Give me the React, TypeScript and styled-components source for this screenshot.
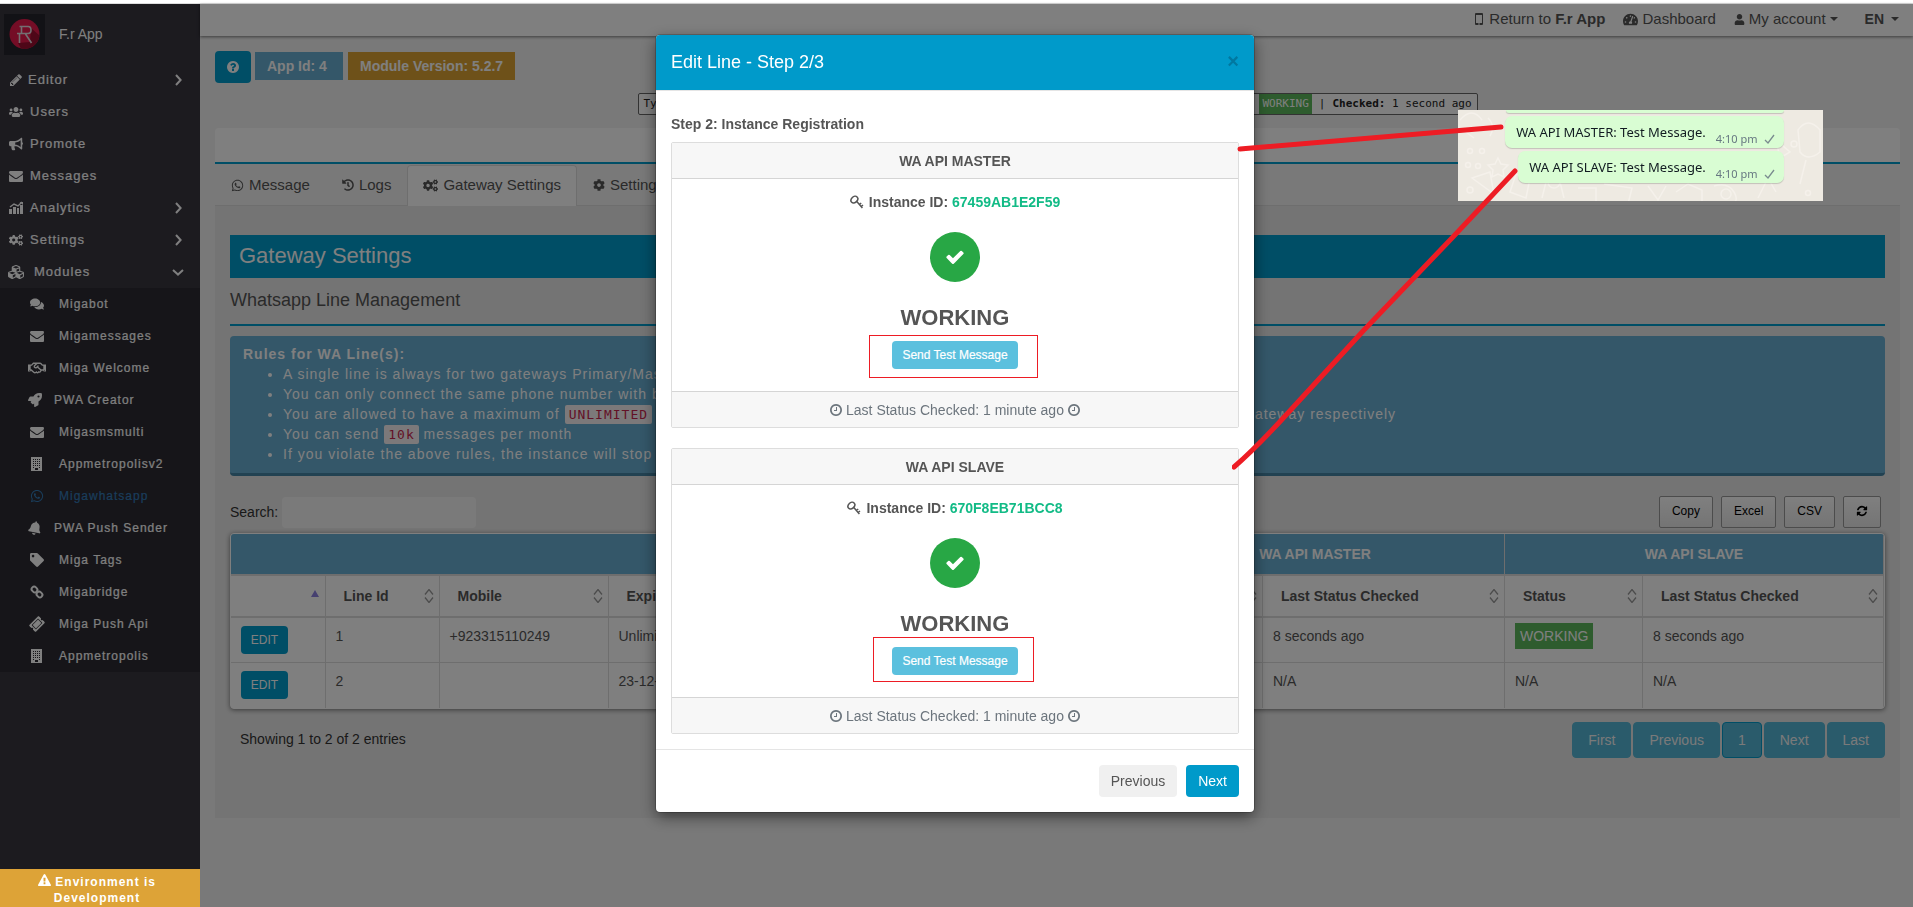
import React from "react";
import styled, { createGlobalStyle } from "styled-components";
import {
  FaUsers, FaBullhorn, FaCogs, FaCubes, FaComments, FaRegHandshake, FaRocket, FaWhatsapp,
  FaBell, FaTag, FaTicketAlt, FaHistory, FaTachometerAlt, FaUser, FaCog,
} from "react-icons/fa";

const blue = "#009ccc";
const steel = "#68aed2";
const sans = `"Liberation Sans", Arial, sans-serif`;
const mono = `"DejaVu Sans Mono", "Courier New", monospace`;

const GlobalStyle = createGlobalStyle`
  * { box-sizing: border-box; }
  body { margin: 0; font: 14px/20px ${sans}; color: #555; background: #f3f3f3; }
  button, input { font-family: inherit; margin: 0; }
  button { cursor: pointer; }
  a { color: inherit; text-decoration: none; }
  ul { margin: 0; padding: 0; list-style: none; }
  h1, h2, h3, h4, p { margin: 0; font-size: inherit; font-weight: normal; }
`;

/* ---------- icons ---------- */

const Svg = styled.svg<{ $size?: number }>`
  width: ${(p) => p.$size ?? 14}px;
  height: ${(p) => p.$size ?? 14}px;
  fill: currentColor;
  flex: none;
`;

const DISC = "M1664 896q0 209-103 385.5t-279.5 279.5-385.5 103-385.5-103-279.5-279.5-103-385.5 103-385.5 279.5-279.5 385.5-103 385.5 103 279.5 279.5 103 385.5z";

const glyphs = {
  check: "M1671 566q0 40-28 68l-724 724-136 136q-28 28-68 28t-68-28l-136-136-362-362q-28-28-28-68t28-68l136-136q28-28 68-28t68 28l294 295 656-657q28-28 68-28t68 28l136 136q28 28 28 68z",
  pencil: "M491 1536l91-91-235-235-91 91v107h128v128h107zm523-928q0-22-22-22-10 0-17 7l-542 542q-7 7-7 17 0 22 22 22 10 0 17-7l542-542q7-7 7-17zm-54-192l416 416-832 832h-416v-416zm683 96q0 53-37 90l-166 166-416-416 166-165q36-38 90-38 53 0 91 38l235 234q37 39 37 91z",
  envelope: "M1792 710v794q0 66-47 113t-113 47h-1472q-66 0-113-47t-47-113v-794q44 49 101 87 362 246 497 345 57 42 92.5 65.5t94.5 48 110 24.5h2q51 0 110-24.5t94.5-48 92.5-65.5q170-123 498-345 57-39 100-87zm0-294q0 79-49 151t-122 123q-376 261-468 325-10 7-42.5 31t-54 38.5-52 32.5-57.5 27-50 9h-2q-23 0-50-9t-57.5-27-52-32.5-54-38.5-42.5-31q-91-64-262-182.5t-205-142.5q-62-42-117-115.5t-55-136.5q0-78 41.5-130t118.5-52h1472q65 0 112.5 47t47.5 113z",
  clock: "M1024 544v448q0 14-9 23t-23 9h-320q-14 0-23-9t-9-23v-64q0-14 9-23t23-9h224v-352q0-14 9-23t23-9h64q14 0 23 9t9 23zm416 352q0-148-73-273t-198-198-273-73-273 73-198 198-73 273 73 273 198 198 273 73 273-73 198-198 73-273z" + DISC,
  refresh: "M1639 1056q0 5-1 7-64 268-268 434.5t-478 166.5q-146 0-282.5-55t-243.5-157l-129 129q-19 19-45 19t-45-19-19-45v-448q0-26 19-45t45-19h448q26 0 45 19t19 45-19 45l-137 137q71 66 161 102t187 36q134 0 250-65t186-179q11-17 53-117 8-23 30-23h192q13 0 22.5 9.5t9.5 22.5zm25-800v448q0 26-19 45t-45 19h-448q-26 0-45-19t-19-45 19-45l138-138q-148-137-349-137-134 0-250 65t-186 179q-11 17-53 117-8 23-30 23h-199q-13 0-22.5-9.5t-9.5-22.5v-7q65-268 270-434.5t480-166.5q146 0 284 55.5t245 156.5l130-129q19-19 45-19t45 19 19 45z",
  question: "M1024 1376v-192q0-14-9-23t-23-9h-192q-14 0-23 9t-9 23v192q0 14 9 23t23 9h192q14 0 23-9t9-23zm256-672q0-88-55.5-163t-138.5-116-170-41q-243 0-371 213-15 24 8 42l132 100q7 6 19 6 16 0 25-12 53-68 86-92 34-24 86-24 48 0 85.5 26t37.5 59q0 38-20 61t-68 45q-63 28-115.5 86.5t-52.5 125.5v36q0 14 9 23t23 9h192q14 0 23-9t9-23q0-19 21.5-49.5t54.5-49.5q32-18 49-28.5t46-35 44.5-48 28-60.5 12.5-81z" + DISC,
  warning: "M1024 1375v-190q0-14-9.5-23.5t-22.5-9.5h-192q-13 0-22.5 9.5t-9.5 23.5v190q0 14 9.5 23.5t22.5 9.5h192q13 0 22.5-9.5t9.5-23.5zm-2-374l18-459q0-12-10-19-13-11-24-11h-220q-11 0-24 11-10 7-10 21l17 457q0 10 10 16.5t24 6.5h185q14 0 23.5-6.5t10.5-16.5zm-14-934l768 1408q35 63-2 126-17 29-46.5 46t-63.5 17h-1536q-34 0-63.5-17t-46.5-46q-37-63-2-126l768-1408q17-31 47-49t65-18 65 18 47 49z",
};

const Glyph = ({ name, size }: { name: keyof typeof glyphs; size?: number }) => (
  <Svg $size={size} viewBox="0 0 1792 1792" aria-hidden="true">
    <path fillRule="evenodd" d={glyphs[name]} />
  </Svg>
);

const BuildingIcon = () => (
  <Svg viewBox="0 0 14 14" aria-hidden="true">
    <path fillRule="evenodd" d="M1 0h11v14H1zM3 2v1h1V2zm2 0v1h1V2zm2 0v1h1V2zm2 0v1h1V2zM3 4v1h1V4zm2 0v1h1V4zm2 0v1h1V4zm2 0v1h1V4zM3 6v1h1V6zm2 0v1h1V6zm2 0v1h1V6zm2 0v1h1V6zM3 8v1h1V8zm2 0v1h1V8zm2 0v1h1V8zm2 0v1h1V8zM3 10v1h1v-1zm6 0v1h1v-1zM5 11v2h3v-2z" />
  </Svg>
);

const ChartIcon = () => (
  <Svg viewBox="0 0 14 14" aria-hidden="true">
    <path d="M0 8h3v5H0zM4 6h3v7H4zM8 7h2v6H8zM11 4h3v9h-3z" />
    <path d="M1 6l4-3 4 2 4-4" fill="none" stroke="currentColor" strokeWidth="1.4" />
    <path d="M10.5 1H14v3z" />
  </Svg>
);

const ChainIcon = () => (
  <Svg viewBox="0 0 14 14" aria-hidden="true">
    <g fill="none" stroke="currentColor" strokeWidth="2">
      <rect x="1.5" y="2" width="6" height="5" rx="2.5" transform="rotate(45 4.500 4.500)" />
      <rect x="6.5" y="7" width="6" height="5" rx="2.5" transform="rotate(45 9.500 9.500)" />
    </g>
  </Svg>
);

const MobileIcon = () => (
  <Svg $size={12} viewBox="0 0 12 12" aria-hidden="true">
    <path fillRule="evenodd" d="M3 0h6q1 0 1 1v10q0 1-1 1H3q-1 0-1-1V1q0-1 1-1zM3 2v8h6V2zM5 10.500v1h2v-1z" />
  </Svg>
);

const KeyIcon = () => (
  <Svg viewBox="0 0 14 14" aria-hidden="true">
    <g fill="none" stroke="currentColor" strokeWidth="1.5">
      <ellipse cx="4.4" cy="4.6" rx="3.8" ry="2.9" transform="rotate(-45 4.4 4.6)" />
      <path d="M6.8 6.6l5.6 6.4M9.2 9.6l2-1.6M11 11.6l2-1.6" />
    </g>
  </Svg>
);

const Chevron = ({ down }: { down?: boolean }) => (
  <Svg $size={12} viewBox="0 0 12 12" aria-hidden="true">
    <path d={down ? "M1 4l5 4.600 5-4.600" : "M4 1l4.600 5-4.600 5"} fill="none" stroke="currentColor" strokeWidth="2" />
  </Svg>
);

const SortIcon = () => (
  <Svg $size={14} viewBox="0 0 14 14" aria-hidden="true">
    <path d="M3 5.500l4-5 4 5M3 8.500l4 5 4-5" fill="none" stroke="currentColor" strokeWidth="1.3" />
  </Svg>
);

const LogoMark = () => (
  <svg width="41" height="41" viewBox="0 0 41 41" aria-hidden="true">
    <defs><clipPath id="disc"><circle cx="20.500" cy="20" r="15" /></clipPath></defs>
    <rect width="41" height="41" fill="#25242c" />
    <circle cx="20.500" cy="20" r="15" fill="#e81a4c" />
    <path clipPath="url(#disc)" d="M27 14l16 14-12 12H20L14 29l12-1z" fill="#9c0e30" />
    <path d="M15.500 12.500h8.500q3 0 3 3.500t-3 3.500h-11M15.500 19v10M17.500 12.500v7M21.500 20l6 9" fill="none" stroke="#e6dfe3" strokeWidth="1.600" />
  </svg>
);

/* ---------- page frame ---------- */

const Page = styled.div`
  min-height: 100vh;
  display: flex;
  flex-direction: column;
`;
const WindowEdge = styled.div`
  height: 4px;
  background: #fff;
  border-bottom: 1px solid #ddd;
`;
const Shell = styled.div`
  flex: 1;
  display: flex;
`;
const Sidebar = styled.aside`
  width: 200px;
  flex: none;
  display: flex;
  flex-direction: column;
  background: #38363f;
  color: #fff;
`;
const Brand = styled.a`
  display: flex;
  align-items: center;
  gap: 14px;
  height: 60px;
  padding: 0 4px;
`;
const MenuLink = styled.a<{ $gap?: number }>`
  display: flex;
  align-items: center;
  gap: ${(p) => p.$gap ?? 6}px;
  height: 32px;
  padding: 0 16px 0 8px;
  font-size: 13px;
  letter-spacing: 1px;
  -webkit-text-stroke: 0.2px currentColor;
  & > svg:last-child:not(:first-child) { margin-left: auto; }
`;
const SubMenu = styled.ul`
  background: #2c2b33;
`;
const SubLink = styled.a<{ $active?: boolean; $tight?: boolean }>`
  display: flex;
  align-items: center;
  gap: ${(p) => (p.$tight ? 11 : 14)}px;
  height: 32px;
  padding-left: ${(p) => (p.$tight ? 27 : 29)}px;
  font-size: 12px;
  letter-spacing: 1px;
  color: ${(p) => (p.$active ? "#337ab7" : "#fff")};
  -webkit-text-stroke: 0.2px currentColor;
`;
const IconSlot = styled.span<{ $wide?: boolean; $rotate?: number }>`
  width: 16px;
  display: inline-flex;
  justify-content: center;
  flex: none;
  & > svg {
    flex: none;
    width: ${(p) => (p.$wide ? 18 : 14)}px;
    height: ${(p) => (p.$wide ? 16 : 14)}px;
    transform: rotate(${(p) => p.$rotate ?? 0}deg);
  }
`;
const EnvNotice = styled.footer`
  position: relative;
  z-index: 20;
  margin-top: auto;
  height: 38px;
  padding: 5px 26px 0 20px;
  overflow: hidden;
  background: #dda337;
  color: #fff;
  font: bold 12px/16px ${sans};
  letter-spacing: 1px;
  text-align: center;
  svg { vertical-align: -1px; }
`;

const Main = styled.div`
  flex: 1;
  min-width: 0;
`;
const TopBar = styled.header`
  display: flex;
  justify-content: flex-end;
  align-items: center;
  gap: 18px;
  height: 32px;
  padding: 0 14px 2px 0;
  background: #fff;
  box-shadow: 0 1px 3px rgba(0, 0, 0, 0.5);
  font-size: 15px;
`;
const TopLink = styled.a<{ $lang?: boolean }>`
  display: flex;
  align-items: center;
  gap: ${(p) => (p.$lang ? 7 : 4)}px;
  margin-left: ${(p) => (p.$lang ? 9 : 0)}px;
  font-size: ${(p) => (p.$lang ? 14 : 15)}px;
  font-weight: ${(p) => (p.$lang ? "bold" : "normal")};
`;
const Caret = styled.span`
  border: 4px solid transparent;
  border-top-color: currentColor;
  border-bottom: 0;
`;
const Content = styled.main`
  padding: 15px 13px 0 15px;
`;
const Badges = styled.div`
  display: flex;
  gap: 4px;
  height: 32px;
`;
const HelpButton = styled.button`
  display: grid;
  place-items: center;
  width: 36px;
  height: 32px;
  border: 0;
  border-radius: 4px;
  background: ${blue};
  color: #fff;
`;
const InfoBadge = styled.span<{ $amber?: boolean }>`
  min-width: 88px;
  height: 28px;
  margin: 1px 1px 0 0;
  padding: 0 12px;
  line-height: 28px;
  font-weight: bold;
  color: #fff;
  background: ${(p) => (p.$amber ? "#dda333" : steel)};
`;
const StatusStrip = styled.div`
  display: flex;
  align-items: center;
  width: 840px;
  height: 22px;
  margin: 10px auto 13px;
  padding: 0 5px;
  border: 1px solid #666;
  border-radius: 2px;
  background: #fff;
  color: #222;
  font: 11px/20px ${mono};
`;
const StatusGroup = styled.div`
  display: flex;
  gap: 7px;
  margin-left: auto;
`;
const StripState = styled.span`
  padding: 0 3px;
  background: #5cb85c;
  color: #fff;
`;
const CardTop = styled.div`
  height: 36px;
  border-bottom: 2px solid ${blue};
  border-radius: 4px 4px 0 0;
  background: #fff;
`;
const Tabs = styled.nav`
  display: flex;
  height: 42px;
  padding-top: 1px;
  border-bottom: 1px solid #ddd;
`;
const Tab = styled.a<{ $active?: boolean }>`
  display: flex;
  align-items: center;
  gap: 5px;
  height: 41px;
  padding: 0 15px 2px;
  border: 1px solid ${(p) => (p.$active ? "#ddd" : "transparent")};
  border-bottom: 0;
  border-radius: 4px 4px 0 0;
  background: ${(p) => (p.$active ? "#fff" : "transparent")};
  font-size: 15px;
`;
const Panel = styled.section`
  padding: 29px 15px 60px;
  background: #e9e9e9;
`;
const PanelTitle = styled.h1`
  height: 43px;
  padding: 0 9px;
  background: ${blue};
  color: #fff;
  font-size: 22px;
  line-height: 41px;
`;
const SectionTitle = styled.h2`
  padding: 12px 0 13px;
  border-bottom: 2px solid ${blue};
  font-size: 18px;
  line-height: 21px;
`;
const Rules = styled.div`
  margin-top: 10px;
  padding: 8px 13px 9px;
  border-bottom: 3px solid #4484a4;
  border-radius: 4px;
  background: ${steel};
  color: #fff;
  letter-spacing: 1px;
  white-space: nowrap;
  overflow: hidden;
  ul { padding-left: 40px; list-style: disc; }
`;
const Code = styled.code`
  padding: 2px 4px;
  border-radius: 2px;
  background: #f9f2f4;
  color: #c7254e;
  font: 13px/15px ${mono};
`;
const TableTools = styled.div`
  display: flex;
  align-items: center;
  gap: 8px;
  margin-top: 20px;
  padding-right: 4px;
  height: 32px;
  color: #333;
`;
const SearchLabel = styled.label`
  display: flex;
  align-items: center;
  gap: 4px;
  margin-right: auto;
`;
const SearchInput = styled.input`
  width: 194px;
  height: 31px;
  padding: 0 8px;
  border: 0;
  border-radius: 4px;
  background: #f5f5f5;
`;
const ToolButton = styled.button`
  display: grid;
  place-items: center;
  height: 32px;
  padding: 0 12px 2px;
  border: 1px solid #999;
  border-radius: 2px;
  background: linear-gradient(#fff, #e9e9e9);
  color: #000;
  font-size: 12px;
`;
const TableFrame = styled.div`
  margin-top: 5px;
  border: 1px solid #fff;
  border-radius: 4px;
  overflow: hidden;
  background: #fff;
  box-shadow: 0 1px 5px rgba(0, 0, 0, 0.5);
`;
const Table = styled.table`
  width: 100%;
  table-layout: fixed;
  border-collapse: collapse;
`;
const GroupTh = styled.th`
  height: 41px;
  border-right: 1px solid #ddd;
  border-bottom: 2px solid #ddd;
  background: ${steel};
  color: #fff;
`;
const Th = styled.th`
  height: 42px;
  padding: 0 3px 0 18px;
  border-right: 1px solid #ddd;
  border-bottom: 2px solid #ddd;
  text-align: left;
`;
const ThInner = styled.div`
  display: flex;
  align-items: center;
  justify-content: space-between;
  svg { color: #999; }
`;
const SortedUp = styled.span`
  margin: -6px 3px 0 auto;
  border: 4px solid transparent;
  border-top: 0;
  border-bottom: 7px solid #8c80e0;
`;
const Td = styled.td`
  height: 45px;
  padding: 8px 10px;
  border-right: 1px solid #ddd;
  border-bottom: 1px solid #ddd;
  vertical-align: top;
  tr:last-child > & { border-bottom: 0; }
`;
const EditButton = styled.button`
  display: block;
  width: 47px;
  height: 28px;
  padding: 0;
  border: 0;
  border-radius: 4px;
  background: ${blue};
  color: #fff;
  font-size: 12px;
`;
const StateBadge = styled.span`
  padding: 5px;
  background: #5cb85c;
  color: #fff;
`;
const TableFoot = styled.div`
  display: flex;
  justify-content: space-between;
  margin-top: 13px;
  padding-left: 10px;
  color: #333;
  line-height: 34px;
`;
const Pager = styled.nav`
  display: flex;
  gap: 2px;
`;
const PageButton = styled.button<{ $current?: boolean }>`
  height: 36px;
  padding: 0 15px;
  border: 1px solid ${(p) => (p.$current ? blue : "#54b6d6")};
  border-radius: 4px;
  background: #54b6d6;
  color: #f5f5f5;
  font-size: 14px;
`;

/* ---------- dialog ---------- */

const Backdrop = styled.div`
  position: fixed;
  inset: 4px 0 0;
  z-index: 10;
  display: flex;
  justify-content: center;
  align-items: flex-start;
  padding: 31px 3px 0 0;
  background: rgba(0, 0, 0, 0.5);
`;
const Dialog = styled.section`
  width: 598px;
  border-radius: 4px;
  background: #fff;
  box-shadow: 0 5px 15px rgba(0, 0, 0, 0.5), 0 0 0 1px rgba(0, 0, 0, 0.2);
`;
const DialogHead = styled.header`
  display: flex;
  align-items: center;
  justify-content: space-between;
  height: 56px;
  padding: 0 15px 2px;
  border-bottom: 1px solid #e5e5e5;
  border-radius: 4px 4px 0 0;
  background: #009aca;
  color: #fff;
  font-size: 18px;
`;
const CloseButton = styled.button`
  padding: 0;
  border: 0;
  background: none;
  color: #0078a0;
  font-size: 20px;
  font-weight: bold;
`;
const DialogBody = styled.div`
  padding: 23px 15px 15px;
`;
const StepTitle = styled.h3`
  margin-bottom: 8px;
  font-weight: bold;
`;
const GatewayCard = styled.article`
  border: 1px solid #ddd;
  border-radius: 2px;
  text-align: center;
  & + & { margin-top: 20px; }
`;
const CardHead = styled.h4`
  height: 36px;
  border-bottom: 1px solid #d5d5d5;
  background: #f7f7f7;
  font-weight: bold;
  line-height: 36px;
`;
const CardBody = styled.div`
  display: flex;
  flex-direction: column;
  align-items: center;
  padding: 13px 0 22px;
`;
const InstanceLine = styled.p`
  display: flex;
  align-items: center;
  gap: 5px;
  font-weight: bold;
  b { color: #12bb86; }
`;
const CheckDisc = styled.span`
  display: grid;
  place-items: center;
  width: 50px;
  height: 50px;
  margin: 20px 0;
  border-radius: 50%;
  background: #28a745;
  color: #fff;
`;
const StateText = styled.p`
  margin-bottom: 8px;
  font-size: 22px;
  line-height: 31px;
  font-weight: bold;
`;
const Marked = styled.div`
  position: relative;
`;
const SendButton = styled.button`
  display: block;
  height: 28px;
  padding: 0 10px;
  border: 0;
  border-radius: 4px;
  background: #5bc0de;
  color: #fff;
  font-size: 12px;
  -webkit-text-stroke: 0.2px currentColor;
`;
const RedBox = styled.span<{ $tall?: boolean }>`
  position: absolute;
  inset: ${(p) => (p.$tall ? "-10px -16px -7px -19px" : "-6px -20px -9px -23px")};
  border: 1px solid #ed1c24;
  pointer-events: none;
`;
const CardFoot = styled.footer`
  display: flex;
  align-items: center;
  justify-content: center;
  gap: 3px;
  height: 36px;
  border-top: 1px solid #d5d5d5;
  background: #f7f7f7;
  color: #6c757d;
`;
const DialogFoot = styled.footer`
  display: flex;
  justify-content: flex-end;
  gap: 9px;
  padding: 15px;
  border-top: 1px solid #e5e5e5;
`;
const DialogButton = styled.button<{ $primary?: boolean }>`
  height: 32px;
  padding: 0 12px;
  border: 0;
  border-radius: 4px;
  background: ${(p) => (p.$primary ? "#009aca" : "#f0f0f0")};
  color: ${(p) => (p.$primary ? "#fff" : "#555")};
  font-size: 14px;
`;

/* ---------- annotations laid over the page ---------- */

const Notes = styled.div`
  position: fixed;
  top: 110px;
  left: calc(50% + 275px);
  z-index: 30;
  pointer-events: none;
`;
const ChatClip = styled.div`
  position: relative;
  display: flex;
  flex-direction: column;
  align-items: flex-end;
  gap: 3px;
  width: 365px;
  height: 91px;
  margin-left: 226px;
  padding-right: 39px;
  overflow: hidden;
  background: #eeeae2;
`;
const Doodles = styled.svg`
  position: absolute;
  inset: 0;
  fill: none;
  stroke: #f5f1eb;
  stroke-width: 1.5;
`;
const Bubble = styled.div<{ $cut?: boolean }>`
  position: relative;
  display: flex;
  align-items: center;
  gap: 10px;
  width: ${(p) => (p.$cut ? "278px" : "auto")};
  height: ${(p) => (p.$cut ? 3 : 32)}px;
  padding: 0 9px 0 11px;
  border-radius: ${(p) => (p.$cut ? "0 0 7px 7px" : "7px")};
  background: #d9fdd3;
  box-shadow: 0 1px 1px rgba(0, 0, 0, 0.18);
  color: #111b21;
  font: 13px/20px "Noto Sans", sans-serif;
`;
const Sent = styled.span`
  display: flex;
  align-items: center;
  gap: 6px;
  margin-top: 14px;
  color: #667781;
  font-size: 11px;
`;
const Arrows = styled.svg`
  position: absolute;
  top: 0;
  left: 0;
  fill: none;
  stroke: #ed1c24;
  stroke-width: 5;
  stroke-linecap: round;
`;

const menu = [
  { label: "Editor", icon: <Glyph name="pencil" />, arrow: true, gap: 4 },
  { label: "Users", icon: <FaUsers /> },
  { label: "Promote", icon: <FaBullhorn /> },
  { label: "Messages", icon: <Glyph name="envelope" /> },
  { label: "Analytics", icon: <ChartIcon />, arrow: true },
  { label: "Settings", icon: <FaCogs />, arrow: true },
];
const modules = [
  { label: "Migabot", icon: <FaComments /> },
  { label: "Migamessages", icon: <Glyph name="envelope" /> },
  { label: "Miga Welcome", icon: <FaRegHandshake />, wide: true },
  { label: "PWA Creator", icon: <FaRocket />, tight: true },
  { label: "Migasmsmulti", icon: <Glyph name="envelope" /> },
  { label: "Appmetropolisv2", icon: <BuildingIcon /> },
  { label: "Migawhatsapp", icon: <FaWhatsapp />, active: true },
  { label: "PWA Push Sender", icon: <FaBell />, tight: true, rotate: 12 },
  { label: "Miga Tags", icon: <FaTag /> },
  { label: "Migabridge", icon: <ChainIcon /> },
  { label: "Miga Push Api", icon: <FaTicketAlt />, rotate: -45 },
  { label: "Appmetropolis", icon: <BuildingIcon /> },
];
const columns = [94, 114, 169, 0, 137, 242, 138, 241];
const headings = ["Line Id", "Mobile", "Expiry", "Status", "Last Status Checked", "Status", "Last Status Checked"];
const rows = [
  ["1", "+923315110249", "Unlimited", "WORKING", "8 seconds ago", "WORKING", "8 seconds ago"],
  ["2", "", "23-12-2024", "N/A", "N/A", "N/A", "N/A"],
];

const Gateway = ({ title, id, tall }: { title: string; id: string; tall?: boolean }) => (
  <GatewayCard>
    <CardHead>{title}</CardHead>
    <CardBody>
      <InstanceLine><KeyIcon /><span>Instance ID: <b>{id}</b></span></InstanceLine>
      <CheckDisc><Glyph name="check" size={20} /></CheckDisc>
      <StateText>WORKING</StateText>
      <Marked>
        <SendButton type="button">Send Test Message</SendButton>
        <RedBox $tall={tall} />
      </Marked>
    </CardBody>
    <CardFoot><Glyph name="clock" /> Last Status Checked: 1 minute ago <Glyph name="clock" /></CardFoot>
  </GatewayCard>
);

const Message = ({ text }: { text: string }) => (
  <Bubble>
    <span>{text}</span>
    <Sent>
      4:10 pm
      <svg width="11" height="10" viewBox="0 0 11 10" fill="none" stroke="#7a8b8f" strokeWidth="1.300" aria-hidden="true"><path d="M1 6l3 3 6-8" /></svg>
    </Sent>
  </Bubble>
);

export default function App() {
  return (
    <Page>
      <GlobalStyle />
      <WindowEdge />
      <Shell>
        <Sidebar>
          <Brand href="#"><LogoMark />F.r App</Brand>
          <nav>
            <ul>
              {menu.map((m) => (
                <li key={m.label}>
                  <MenuLink href="#" $gap={m.gap}>
                    <IconSlot>{m.icon}</IconSlot>{m.label}{m.arrow && <Chevron />}
                  </MenuLink>
                </li>
              ))}
              <li>
                <MenuLink href="#" $gap={10}><IconSlot $wide><FaCubes /></IconSlot>Modules<Chevron down /></MenuLink>
                <SubMenu>
                  {modules.map((m) => (
                    <li key={m.label}>
                      <SubLink href="#" $active={m.active} $tight={m.tight}>
                        <IconSlot $wide={m.wide} $rotate={m.rotate}>{m.icon}</IconSlot>{m.label}
                      </SubLink>
                    </li>
                  ))}
                </SubMenu>
              </li>
            </ul>
          </nav>
          <EnvNotice><Glyph name="warning" size={13} /> Environment is Development</EnvNotice>
        </Sidebar>

        <Main>
          <TopBar>
            <TopLink href="#"><MobileIcon /><span>Return to <b>F.r App</b></span></TopLink>
            <TopLink href="#"><FaTachometerAlt size={15} />Dashboard</TopLink>
            <TopLink href="#"><FaUser size={11} />My account <Caret /></TopLink>
            <TopLink href="#" $lang>EN <Caret /></TopLink>
          </TopBar>
          <Content>
            <Badges>
              <HelpButton type="button" aria-label="Help"><Glyph name="question" /></HelpButton>
              <InfoBadge>App Id: 4</InfoBadge>
              <InfoBadge $amber>Module Version: 5.2.7</InfoBadge>
            </Badges>
            <StatusStrip>
              <span>Type:</span>
              <StatusGroup>
                <StripState>WORKING</StripState>
                <span>|</span>
                <span><b>Checked:</b> 1 second ago</span>
              </StatusGroup>
            </StatusStrip>
            <CardTop />
            <Tabs>
              <Tab href="#"><FaWhatsapp size={13} />Message</Tab>
              <Tab href="#"><FaHistory size={12} />Logs</Tab>
              <Tab href="#" $active><FaCogs size={15} />Gateway Settings</Tab>
              <Tab href="#"><FaCog size={12} />Settings</Tab>
            </Tabs>
            <Panel>
              <PanelTitle>Gateway Settings</PanelTitle>
              <SectionTitle>Whatsapp Line Management</SectionTitle>
              <Rules>
                <b>Rules for WA Line(s):</b>
                <ul>
                  <li>A single line is always for two gateways Primary/Master and Secondary/Slave</li>
                  <li>You can only connect the same phone number with both gateways</li>
                  <li>You are allowed to have a maximum of <Code>UNLIMITED</Code> lines and register all these instances on the Primary/Master and Secondary/Slave gateway respectively</li>
                  <li>You can send <Code>10k</Code> messages per month</li>
                  <li>If you violate the above rules, the instance will stop working</li>
                </ul>
              </Rules>
              <TableTools>
                <SearchLabel>Search:<SearchInput type="search" /></SearchLabel>
                <ToolButton type="button">Copy</ToolButton>
                <ToolButton type="button">Excel</ToolButton>
                <ToolButton type="button">CSV</ToolButton>
                <ToolButton type="button" aria-label="Refresh"><Glyph name="refresh" size={12} /></ToolButton>
              </TableTools>
              <TableFrame>
                <Table>
                  <colgroup>
                    {columns.map((w, i) => <col key={i} width={w || undefined} />)}
                  </colgroup>
                  <thead>
                    <tr>
                      <GroupTh colSpan={4} aria-label="Line" />
                      <GroupTh colSpan={2}>WA API MASTER</GroupTh>
                      <GroupTh colSpan={2}>WA API SLAVE</GroupTh>
                    </tr>
                    <tr>
                      <Th aria-label="Actions"><ThInner><SortedUp /></ThInner></Th>
                      {headings.map((h, i) => (
                        <Th key={i}><ThInner>{h}<SortIcon /></ThInner></Th>
                      ))}
                    </tr>
                  </thead>
                  <tbody>
                    {rows.map((r) => (
                      <tr key={r[0]}>
                        <Td><EditButton type="button">EDIT</EditButton></Td>
                        {r.map((c, i) => (
                          <Td key={i}>{c === "WORKING" ? <StateBadge>{c}</StateBadge> : c}</Td>
                        ))}
                      </tr>
                    ))}
                  </tbody>
                </Table>
              </TableFrame>
              <TableFoot>
                <span>Showing 1 to 2 of 2 entries</span>
                <Pager>
                  <PageButton type="button">First</PageButton>
                  <PageButton type="button">Previous</PageButton>
                  <PageButton type="button" $current>1</PageButton>
                  <PageButton type="button">Next</PageButton>
                  <PageButton type="button">Last</PageButton>
                </Pager>
              </TableFoot>
            </Panel>
          </Content>
        </Main>
      </Shell>

      <Backdrop>
        <Dialog role="dialog" aria-label="Edit Line">
          <DialogHead>Edit Line - Step 2/3<CloseButton type="button" aria-label="Close">×</CloseButton></DialogHead>
          <DialogBody>
            <StepTitle>Step 2: Instance Registration</StepTitle>
            <Gateway title="WA API MASTER" id="67459AB1E2F59" />
            <Gateway title="WA API SLAVE" id="670F8EB71BCC8" tall />
          </DialogBody>
          <DialogFoot>
            <DialogButton type="button">Previous</DialogButton>
            <DialogButton type="button" $primary>Next</DialogButton>
          </DialogFoot>
        </Dialog>
      </Backdrop>

      <Notes>
        <ChatClip>
          <Doodles width="365" height="91" viewBox="0 0 365 91" aria-hidden="true">
            <path d="M2 10q12-14 22 0M8 22l8 6M30 8q8 8 2 18M40 48l3 6 7 1-5 5 1 7-6-3-6 3 1-7-5-5 7-1zM14 68l22 16-4-22zM52 82l6-18 14 4-4 20zM84 88l4-16h14l4 16M120 78h18v13M146 74l28 4-4 16M190 76l10 14 8-14M218 82l12-8 14 6v12M256 76q14-4 20 6t-4 12M300 88l10-20 8 14M340 20q10-14 22 0v22q-12 10-20 0zM348 50l-6 24M318 30l14 12-10 6z" />
            <circle cx="12" cy="41" r="2.5" /><circle cx="24" cy="41" r="2.5" /><circle cx="10" cy="55" r="2.5" /><circle cx="20" cy="56" r="2.500" /><circle cx="12" cy="80" r="3" />
            <circle cx="336" cy="34" r="3" /><circle cx="350" cy="83" r="2.5" /><circle cx="268" cy="84" r="5" /><circle cx="96" cy="72" r="6" />
          </Doodles>
          <Bubble $cut />
          <Message text="WA API MASTER: Test Message." />
          <Message text="WA API SLAVE: Test Message." />
        </ChatClip>
        <Arrows width="300" height="370" viewBox="0 0 300 370" aria-hidden="true">
          <path d="M8 39L269 17" />
          <path d="M2 357Q24 338 55 304L132 220 220 128 283 61" />
        </Arrows>
      </Notes>
    </Page>
  );
}
